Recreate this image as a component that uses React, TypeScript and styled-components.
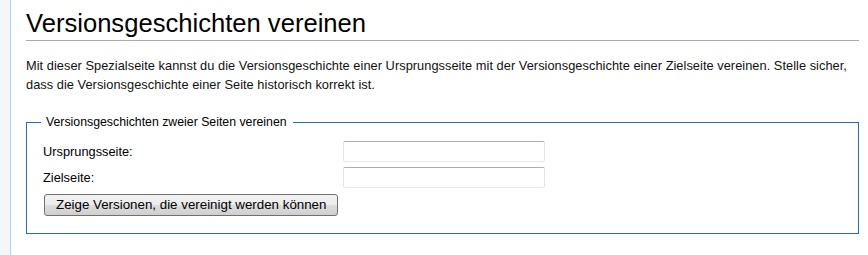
import React from 'react';
import styled, { createGlobalStyle } from 'styled-components';

const GlobalStyle = createGlobalStyle`
  html, body {
    margin: 0;
    padding: 0;
    background: #f6f6f6;
  }
  body {
    font-family: "Liberation Sans", Arial, sans-serif;
    color: #000;
  }
`;

const Page = styled.div`
  display: flex;
  min-height: 100vh;
`;

const Rail = styled.div`
  width: 10px;
  flex: none;
  background: #f6f6f6;
`;

const Content = styled.main`
  flex: 1;
  background: #fff;
  border-left: 1px solid #a7d7f9;
  padding: 8px 9px 0 15px;
  font-size: 12.8px;
  line-height: 1.5;
`;

const Title = styled.h1`
  margin: 0;
  padding: 0 0 2px;
  font-size: 25.6px;
  line-height: 30px;
  font-weight: normal;
  border-bottom: 1px solid #aaa;
`;

const Intro = styled.p`
  margin: 15px 0 0;
  line-height: 19px;
  letter-spacing: 0.04px;
  color: #111;
`;

const Box = styled.fieldset`
  margin: 19px 0 0;
  padding: 9px 16px 17px 16px;
  border: 1px solid #2a6ab0;
`;

const Legend = styled.legend`
  margin-left: -2px;
  padding: 0 6px 0 5px;
  font-size: 12.3px;
  line-height: 19px;
`;

const FormGrid = styled.div`
  display: grid;
  grid-template-columns: 300px 202px;
  row-gap: 5px;
  align-items: center;
`;

const Label = styled.label`
  font-size: 12.8px;
  line-height: 16px;
  padding-top: 1px;
`;

const Field = styled.input`
  box-sizing: border-box;
  width: 202px;
  height: 21px;
  margin: 0;
  border: 1px solid;
  border-color: #abadb3 #e2e3ea #e3e9ef #e2e3ea;
  border-radius: 2px;
  background: #fff;
  font-family: "Liberation Sans", Arial, sans-serif;
  font-size: 13px;
`;

const SubmitButton = styled.button`
  grid-column: 1 / span 2;
  justify-self: start;
  margin: 1px 0 0 1px;
  height: 22px;
  padding: 0 11px;
  border: 1px solid #707070;
  border-radius: 3px;
  background: linear-gradient(#f2f2f2 0%, #ebebeb 50%, #dddddd 51%, #cfcfcf 100%);
  color: #000;
  font-family: "Liberation Sans", Arial, sans-serif;
  font-size: 13.33px;
  line-height: 20px;
`;

const App: React.FC = () => (
  <Page>
    <GlobalStyle />
    <Rail />
    <Content>
      <Title>Versionsgeschichten vereinen</Title>
      <Intro>
        Mit dieser Spezialseite kannst du die Versionsgeschichte einer Ursprungsseite mit der
        Versionsgeschichte einer Zielseite vereinen. Stelle sicher, dass die Versionsgeschichte
        einer Seite historisch korrekt ist.
      </Intro>
      <Box>
        <Legend>Versionsgeschichten zweier Seiten vereinen</Legend>
        <FormGrid>
          <Label htmlFor="mergehistory-source">Ursprungsseite:</Label>
          <Field id="mergehistory-source" type="text" />
          <Label htmlFor="mergehistory-dest">Zielseite:</Label>
          <Field id="mergehistory-dest" type="text" />
          <SubmitButton type="button">Zeige Versionen, die vereinigt werden können</SubmitButton>
        </FormGrid>
      </Box>
    </Content>
  </Page>
);

export default App;
